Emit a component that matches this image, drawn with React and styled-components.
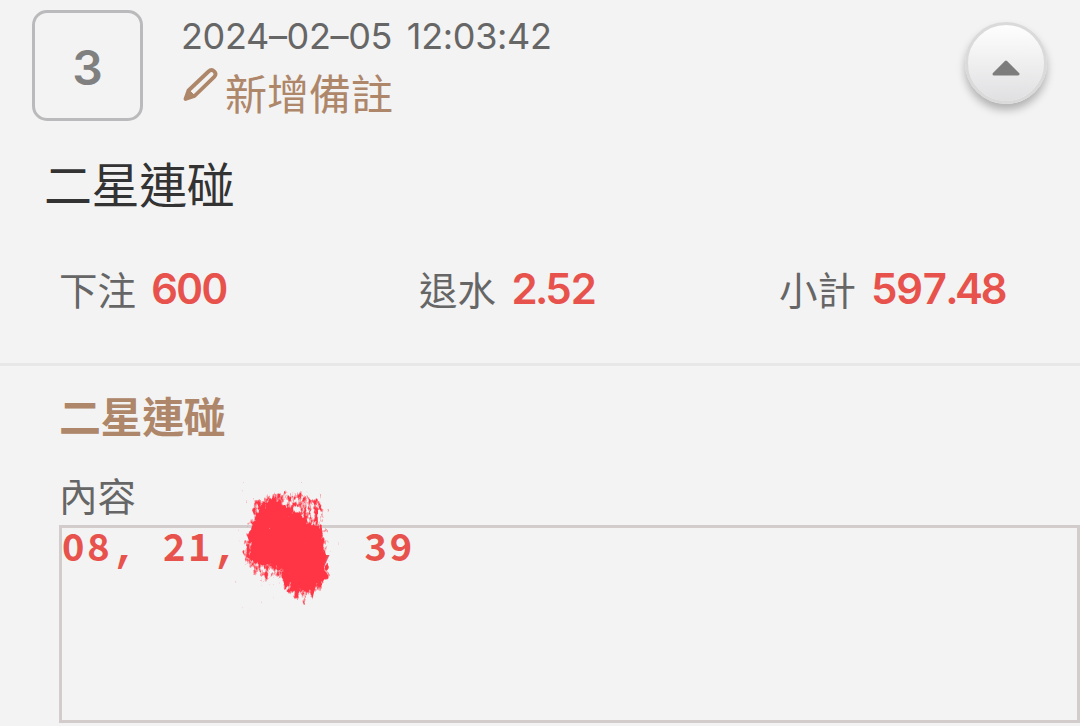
import styled, { createGlobalStyle } from "styled-components";

const GlobalStyle = createGlobalStyle`
  * {
    box-sizing: border-box;
  }

  body {
    margin: 0;
    background: #f3f3f3;
    font-family: Inter, "Noto Sans CJK TC", sans-serif;
    overflow: hidden;
  }
`;

const PageStyle = styled.div`
  display: flex;
  flex-direction: column;
  width: 1080px;
  height: 726px;
  background: #f3f3f3;
`;

const HeaderStyle = styled.header`
  display: flex;
  align-items: flex-start;
  height: 121px;
  padding: 10px 33px 0 32px;
`;

const IndexStyle = styled.div`
  display: flex;
  align-items: center;
  justify-content: center;
  width: 111px;
  height: 111px;
  padding-top: 5px;
  border: 3px solid #bababc;
  border-radius: 15px;
  font-weight: 600;
  font-size: 48px;
  line-height: 58px;
  color: #808080;
`;

const InfoStyle = styled.div`
  display: flex;
  flex-direction: column;
  flex: 1;
  margin-left: 38px;
`;

const DateStyle = styled.time`
  height: 52px;
  font-weight: 370;
  font-size: 36px;
  line-height: 52px;
  letter-spacing: -0.35px;
  word-spacing: 5px;
  white-space: nowrap;
  color: #666;
`;

const AddNoteStyle = styled.button`
  display: flex;
  align-items: flex-start;
  column-gap: 6px;
  height: 56px;
  padding: 0 0 0 2px;
  border: none;
  background: none;
  font-family: "Noto Sans CJK TC", sans-serif;
  font-weight: 400;
  font-size: 42px;
  line-height: 60px;
  color: #ae8669;
`;

const PencilStyle = styled.svg`
  flex: none;
  width: 36px;
  height: 36px;
  margin-top: 5px;
`;

const ToggleStyle = styled.button`
  display: flex;
  align-items: center;
  justify-content: center;
  width: 82px;
  height: 82px;
  margin-top: 12px;
  padding: 9px 0 0;
  border: 3px solid #dadada;
  border-radius: 50%;
  background: linear-gradient(#fefefe, #e0e0e2) padding-box;
  box-shadow: 0 6px 8px rgba(0, 0, 0, 0.27);
`;

const GameTitleStyle = styled.h1`
  margin: 30px 0 0 44px;
  font-weight: 400;
  font-size: 48px;
  line-height: 70px;
  letter-spacing: -0.4px;
  color: #333;
`;

const StatsStyle = styled.div`
  display: grid;
  grid-template-columns: repeat(3, 360px);
  height: 145px;
  padding-top: 38px;
  border-bottom: 3px solid #e7e7e7;
`;

const StatStyle = styled.div`
  display: flex;
  column-gap: 15px;
  padding-left: 59px;
  line-height: 60px;
`;

const LabelStyle = styled.span`
  font-family: "Noto Sans CJK TC", sans-serif;
  font-weight: 400;
  font-size: 38.5px;
  line-height: 58px;
  color: #666;
`;

const AmountStyle = styled.strong`
  font-weight: 600;
  font-size: 42px;
  font-variant-numeric: tabular-nums;
  letter-spacing: -2.1px;
  color: #e8524c;
`;

const DetailStyle = styled.section`
  display: flex;
  flex-direction: column;
  padding-left: 59px;
`;

const DetailTitleStyle = styled.h2`
  margin: 21px 0 0;
  font-weight: 700;
  font-size: 42px;
  line-height: 62px;
  letter-spacing: -0.4px;
  color: #ae8669;
`;

const ContentLabelStyle = styled(LabelStyle)`
  height: 76px;
  padding-top: 16px;
`;

const ContentBoxStyle = styled.div`
  position: relative;
  height: 198px;
  border: 3px solid #d2cccd;
`;

const NumbersStyle = styled.div`
  font-family: "Liberation Mono", monospace;
  font-weight: 700;
  font-size: 42px;
  line-height: 44px;
  white-space: pre;
  color: #e8524c;
`;

const DigitsStyle = styled.span`
  font-family: "Noto Sans CJK TC", sans-serif;
  font-size: 38px;
  line-height: 0;
  letter-spacing: 2.8px;
`;

const ScribbleStyle = styled.svg`
  position: absolute;
  top: -48px;
  left: 168px;
  width: 120px;
  height: 130px;
`;

const stats = [
  { label: "下注", value: "600" },
  { label: "退水", value: "2.52" },
  { label: "小計", value: "597.48" },
];

function Pencil() {
  return (
    <PencilStyle viewBox="0 0 36 36" fill="none" stroke="#ae8669">
      <path
        d="M2.5 32 5.5 23.5 25.5 4.5Q28.5 1.8 31.2 4.3 33.9 7 31.2 9.9L11.5 29Z"
        strokeWidth="3.8"
        strokeLinejoin="round"
      />
      <path d="M2.5 32 5.5 22.5 12 29Z" fill="#ae8669" strokeWidth="1" />
    </PencilStyle>
  );
}

function Scribble() {
  return (
    <ScribbleStyle viewBox="0 0 120 130">
      <filter
        id="brush"
        x="-20%"
        y="-20%"
        width="140%"
        height="140%"
        colorInterpolationFilters="sRGB"
      >
        <feTurbulence
          type="fractalNoise"
          baseFrequency="0.26 0.15"
          numOctaves="3"
          seed="4"
          result="noise"
        />
        <feColorMatrix
          in="noise"
          values="0 0 0 0 0  0 0 0 0 0  0 0 0 0 0  1 0 0 0 0"
          result="grain"
        />
        <feGaussianBlur in="SourceAlpha" stdDeviation="3" result="soft" />
        <feComposite
          in="soft"
          in2="grain"
          operator="arithmetic"
          k2="3.6"
          k3="4"
          k4="-3.2"
          result="rough"
        />
        <feFlood floodColor="#ff3545" />
        <feComposite in2="rough" operator="in" />
        <feGaussianBlur stdDeviation="0.5" />
      </filter>
      <g filter="url(#brush)">
        <path
          opacity="0.46"
          d="M23 18 43 13 60 10 76 12 91 17 95 35 95 62 98 83 98 98 88 112 74 122 60 118 50 105 47 94 35 104 20 91 11 80 17 55 22 38Z"
        />
        <path d="M29 30 38 22 48 20 56 31 70 36 79 45 92 50 94 66 93 78 97 88 94 102 80 110 62 108 54 98 52 86 36 84 20 78 19 62 24 42Z" />
      </g>
    </ScribbleStyle>
  );
}

function App() {
  return (
    <>
      <GlobalStyle />
      <PageStyle>
        <HeaderStyle>
          <IndexStyle>3</IndexStyle>
          <InfoStyle>
            <DateStyle>2024–02–05 12:03:42</DateStyle>
            <AddNoteStyle>
              <Pencil />
              新增備註
            </AddNoteStyle>
          </InfoStyle>
          <ToggleStyle>
            <svg width="28" height="16" viewBox="0 0 28 16">
              <path
                d="M14 2 26 14H2Z"
                fill="#7d7d7d"
                stroke="#7d7d7d"
                strokeWidth="3"
                strokeLinejoin="round"
              />
            </svg>
          </ToggleStyle>
        </HeaderStyle>
        <GameTitleStyle>二星連碰</GameTitleStyle>
        <StatsStyle>
          {stats.map((stat) => (
            <StatStyle key={stat.label}>
              <LabelStyle>{stat.label}</LabelStyle>
              <AmountStyle>{stat.value}</AmountStyle>
            </StatStyle>
          ))}
        </StatsStyle>
        <DetailStyle>
          <DetailTitleStyle>二星連碰</DetailTitleStyle>
          <ContentLabelStyle>內容</ContentLabelStyle>
          <ContentBoxStyle>
            <NumbersStyle>
              <DigitsStyle>08</DigitsStyle>
              {", "}
              <DigitsStyle>21</DigitsStyle>
              {",   , "}
              <DigitsStyle>39</DigitsStyle>
            </NumbersStyle>
            <Scribble />
          </ContentBoxStyle>
        </DetailStyle>
      </PageStyle>
    </>
  );
}

export default App;
